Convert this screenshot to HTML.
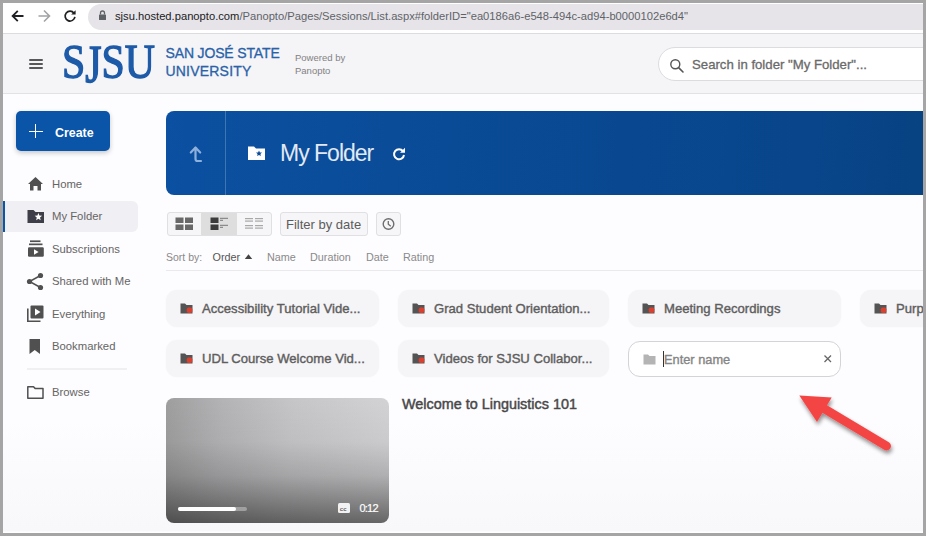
<!DOCTYPE html>
<html><head><meta charset="utf-8">
<style>
html,body{margin:0;padding:0;}
body{width:926px;height:536px;overflow:hidden;background:#a5a5a5;position:relative;font-family:"Liberation Sans",sans-serif;}
#pg{position:absolute;left:0;top:0;width:926px;height:536px;overflow:hidden;background:linear-gradient(180deg,#fdfcfe 0px,#fdfcfe 420px,#f8f7fa 531px,#ffffff 532px);clip-path:inset(3px 3px 3px 3px);}
.a{position:absolute;box-sizing:border-box;}
.t{position:absolute;white-space:nowrap;line-height:1;}
svg{position:absolute;overflow:visible;}
.tile{height:37px;background:#f5f4f6;border-radius:11px;box-shadow:0 0 2px rgba(0,0,0,0.03);}
.tt{font-size:13.1px;color:#5e5e5e;-webkit-text-stroke:0.4px #5e5e5e;}
</style></head>
<body>
<div id="pg">
  <!-- browser bar -->
  <div class="a" style="left:0;top:0;width:926px;height:34px;background:#fff;border-bottom:1px solid #dcdbde;"></div>
  <div class="a" style="left:88px;top:3.5px;width:900px;height:26px;background:#e6e4e8;border-radius:13px;"></div>
  <!-- back -->
  <svg style="left:0;top:0" width="926" height="33">
    <g fill="none" stroke="#202124" stroke-width="1.8">
      <path d="M13 16H23.5 M17.8 10.8 L12.6 16 L17.8 21.2"/>
    </g>
    <g fill="none" stroke="#a0a3a7" stroke-width="1.6">
      <path d="M38.5 16H49.5 M44 10.5 L49.5 16 L44 21.5"/>
    </g>
    <g fill="none" stroke="#202124" stroke-width="1.7">
      <path d="M74 13.2 A4.9 4.9 0 1 0 74.9 16.8"/>
    </g>
    <path d="M75.6 10.2 L75.6 14.6 L71.2 14.6 Z" fill="#202124"/>
    <g fill="#5f6368">
      <rect x="99" y="14.5" width="7" height="5.5" rx="0.6"/>
      <path d="M100.5 14.5 V13 A2 2 0 0 1 104.5 13 V14.5" fill="none" stroke="#5f6368" stroke-width="1.3"/>
    </g>
  </svg>
  <div class="t" style="left:115px;top:11px;font-size:11.2px;color:#202124;">sjsu.hosted.panopto.com<span style="color:#5f6368">/Panopto/Pages/Sessions/List.aspx#folderID="ea0186a6-e548-494c-ad94-b0000102e6d4"</span></div>

  <!-- header -->
  <div class="a" style="left:0;top:34px;width:926px;height:60px;background:#f5f4f7;border-bottom:1px solid #e2e1e4;"></div>

  <!-- hamburger -->
  <div class="a" style="left:28.5px;top:59px;width:14.5px;height:2px;background:#585858;border-radius:1px;"></div>
  <div class="a" style="left:28.5px;top:63px;width:14.5px;height:2px;background:#585858;border-radius:1px;"></div>
  <div class="a" style="left:28.5px;top:67px;width:14.5px;height:2px;background:#585858;border-radius:1px;"></div>
  <!-- SJSU logo -->
  <div class="t" style="left:62px;top:38.5px;font-family:'Liberation Serif',serif;font-size:47.5px;color:#1d5aa8;-webkit-text-stroke:1.3px #1d5aa8;transform:scaleX(0.88);transform-origin:0 0;">S<span style="display:inline-block;transform:translateY(-1.1px) scaleY(1.12);transform-origin:0 0;">J</span>SU</div>
  <div class="t" style="left:165.5px;top:46px;font-size:14px;color:#2a62a8;letter-spacing:-0.15px;-webkit-text-stroke:0.3px #2a62a8;">SAN JOSÉ STATE</div>
  <div class="t" style="left:165.5px;top:64px;font-size:14px;color:#2a62a8;letter-spacing:0.2px;-webkit-text-stroke:0.3px #2a62a8;">UNIVERSITY</div>
  <div class="t" style="left:295px;top:53px;font-size:9.5px;color:#828282;">Powered by</div>
  <div class="t" style="left:295px;top:66px;font-size:9.5px;color:#828282;">Panopto</div>
  <!-- search -->
  <div class="a" style="left:658px;top:47px;width:300px;height:34px;background:#fff;border:1px solid #dcdbdf;border-radius:17px;"></div>
  <svg style="left:0;top:0" width="926" height="100">
    <circle cx="675.3" cy="64.3" r="4.5" fill="none" stroke="#555" stroke-width="1.4"/>
    <path d="M678.6 67.6 L683 72" stroke="#555" stroke-width="1.6" stroke-linecap="round"/>
  </svg>
  <div class="t" style="left:692px;top:58px;font-size:13.2px;color:#6a6a6a;-webkit-text-stroke:0.3px #6a6a6a;">Search in folder "My Folder"...</div>

  <!-- sidebar -->
  <div class="a" style="left:16px;top:111px;width:94px;height:40px;background:#0a55a8;border-radius:5px;box-shadow:0 2px 5px rgba(0,0,0,0.22);"></div>
  <div class="a" style="left:28.5px;top:130.5px;width:14px;height:1.6px;background:#fff;"></div>
  <div class="a" style="left:34.7px;top:124.3px;width:1.6px;height:14px;background:#fff;"></div>
  <div class="t" style="left:55px;top:126.5px;font-size:12.4px;font-weight:700;color:#fff;">Create</div>

  <div class="a" style="left:3px;top:201px;width:135px;height:31px;background:#f0eff3;border-radius:0 6px 6px 0;"></div>
  <div class="a" style="left:3px;top:201px;width:2px;height:31px;background:#0a55a8;"></div>

  <svg style="left:0;top:0" width="160" height="420">
    <!-- home -->
    <path d="M28 184 L35.5 177 L43 184 L41 184 L41 190.5 L37.5 190.5 L37.5 186 L33.5 186 L33.5 190.5 L30 190.5 L30 184 Z" fill="#505050"/>
    <!-- my folder -->
    <path d="M27.5 210 H33.5 L35.5 212 H44 V223 H27.5 Z" fill="#3e3e48"/>
    <path d="M38.40 213.10 L39.40 215.62 L42.11 215.79 L40.02 217.53 L40.69 220.16 L38.40 218.70 L36.11 220.16 L36.78 217.53 L34.69 215.79 L37.40 215.62 Z" fill="#fff"/>
    <!-- subscriptions -->
    <rect x="30" y="240.4" width="10.5" height="1.7" fill="#505050"/>
    <rect x="29" y="243.5" width="13.5" height="1.7" fill="#505050"/>
    <rect x="28" y="247.3" width="15.8" height="9.5" rx="1.2" fill="#505050"/>
    <path d="M34 249.3 L38.6 252 L34 254.7 Z" fill="#fff"/>
    <!-- share -->
    <circle cx="40.5" cy="275.5" r="2.6" fill="#505050"/>
    <circle cx="29.5" cy="281.5" r="2.6" fill="#505050"/>
    <circle cx="40.5" cy="287.5" r="2.6" fill="#505050"/>
    <path d="M40.5 275.5 L29.5 281.5 L40.5 287.5" fill="none" stroke="#505050" stroke-width="1.5"/>
    <!-- everything -->
    <rect x="30.5" y="305.5" width="13" height="13" rx="1" fill="#505050"/>
    <path d="M35 308.5 L40.5 312 L35 315.5 Z" fill="#fff"/>
    <path d="M27.8 308.5 V321.2 H40.5" fill="none" stroke="#505050" stroke-width="1.6"/>
    <!-- bookmark -->
    <path d="M29.5 339 H40 V354 L34.75 350 L29.5 354 Z" fill="#505050"/>
    <!-- divider -->
    <rect x="27" y="368.5" width="100" height="1" fill="#e4e3e6"/>
    <!-- browse -->
    <path d="M27.8 386.8 H33.5 L35.3 388.6 H43 V398.2 H27.8 Z" fill="none" stroke="#505050" stroke-width="1.5" stroke-linejoin="round"/>
  </svg>
  <div class="t" style="left:52px;top:179px;font-size:11.3px;color:#656565;">Home</div>
  <div class="t" style="left:52px;top:211px;font-size:11.3px;color:#656565;">My Folder</div>
  <div class="t" style="left:52px;top:244px;font-size:11.3px;color:#656565;">Subscriptions</div>
  <div class="t" style="left:52px;top:276px;font-size:11.3px;color:#656565;">Shared with Me</div>
  <div class="t" style="left:52px;top:309px;font-size:11.3px;color:#656565;">Everything</div>
  <div class="t" style="left:52px;top:341px;font-size:11.3px;color:#656565;">Bookmarked</div>
  <div class="t" style="left:52px;top:387px;font-size:11.3px;color:#656565;">Browse</div>

  <!-- banner -->
  <div class="a" style="left:166px;top:111px;width:757px;height:84px;background:linear-gradient(95deg,#0b50a1 0%,#0a4c98 30%,#094891 60%,#08458a 85%,#074282 100%);border-radius:8px 0 0 8px;"></div>
  <div class="a" style="left:225px;top:111px;width:1px;height:84px;background:rgba(255,255,255,0.22);"></div>
  <svg style="left:0;top:0" width="926" height="200">
    <path d="M195.5 149 V159 Q195.5 161 197.5 161 H201 M190.8 152.5 L195.5 147.5 L200.2 152.5" fill="none" stroke="#8fb0dc" stroke-width="2.2" stroke-linecap="round" stroke-linejoin="round"/>
    <path d="M248 146.5 H254 L256 148.5 H265 V160 H248 Z" fill="#fff"/>
    <path d="M259 150.5 L259.9 152.4 L262 152.6 L260.4 154 L260.9 156.1 L259 155 L257.1 156.1 L257.6 154 L256 152.6 L258.1 152.4 Z" fill="#0a4c9a"/>
    <path d="M403 151.2 A5 5 0 1 0 404 155" fill="none" stroke="#fff" stroke-width="2"/>
    <path d="M405 147.8 L405 152.8 L400 152.8 Z" fill="#fff"/>
  </svg>
  <div class="t" style="left:280px;top:141.5px;font-size:23px;color:#e2e9f4;letter-spacing:-1px;">My Folder</div>

  <!-- toolbar -->
  <div class="a" style="left:167px;top:212px;width:105px;height:24px;background:#f6f5f7;border:1px solid #e0dfe2;border-radius:3px;"></div>
  <div class="a" style="left:201px;top:213px;width:36px;height:22px;background:#dedede;"></div>
  <svg style="left:0;top:0" width="926" height="280">
    <g fill="#686868">
      <rect x="175.5" y="217.5" width="8" height="5.5"/><rect x="185" y="217.5" width="8" height="5.5"/>
      <rect x="175.5" y="224.5" width="8" height="5.5"/><rect x="185" y="224.5" width="8" height="5.5"/>
    </g>
    <g fill="#3c3c3c">
      <rect x="210.5" y="217.5" width="8" height="5.5"/><rect x="210.5" y="224.5" width="8" height="5.5"/>
      <rect x="220" y="217.8" width="8" height="1" fill="#777"/><rect x="220" y="219.8" width="3" height="1" fill="#777"/>
      <rect x="220" y="224.8" width="8" height="1" fill="#777"/><rect x="220" y="226.8" width="3" height="1" fill="#777"/>
    </g>
    <g fill="#a8a8a8">
      <rect x="245" y="218" width="8" height="1.2"/><rect x="255" y="218" width="8" height="1.2"/>
      <rect x="245" y="220.5" width="8" height="1.2"/><rect x="255" y="220.5" width="8" height="1.2"/>
      <rect x="245" y="225" width="8" height="1.2"/><rect x="255" y="225" width="8" height="1.2"/>
      <rect x="245" y="227.5" width="8" height="1.2"/><rect x="255" y="227.5" width="8" height="1.2"/>
    </g>
    <path d="M244.8 259 L248.5 254.3 L252.2 259 Z" fill="#444"/>
  </svg>
  <div class="a" style="left:280px;top:212px;width:88px;height:24px;background:#f6f5f7;border:1px solid #e0dfe2;border-radius:3px;"></div>
  <div class="t" style="left:286px;top:217.5px;font-size:13px;color:#5c5c5c;">Filter by date</div>
  <div class="a" style="left:376px;top:212px;width:25px;height:24px;background:#f6f5f7;border:1px solid #e0dfe2;border-radius:3px;"></div>
  <svg style="left:0;top:0" width="926" height="280">
    <circle cx="388.5" cy="224" r="5.3" fill="none" stroke="#6e6e6e" stroke-width="1.4"/>
    <path d="M388.3 221 V224.3 L390.8 226.2" fill="none" stroke="#6e6e6e" stroke-width="1.3"/>
  </svg>
  <div class="t" style="left:166px;top:252px;font-size:10.5px;color:#8a8a8a;">Sort by:</div>
  <div class="t" style="left:212.5px;top:252px;font-size:10.8px;color:#555;">Order</div>
  <div class="t" style="left:267px;top:252px;font-size:10.8px;color:#8a8a8a;">Name</div>
  <div class="t" style="left:310px;top:252px;font-size:10.8px;color:#8a8a8a;">Duration</div>
  <div class="t" style="left:366px;top:252px;font-size:10.8px;color:#8a8a8a;">Date</div>
  <div class="t" style="left:403px;top:252px;font-size:10.8px;color:#8a8a8a;">Rating</div>
  <div class="a" style="left:166px;top:270px;width:760px;height:1px;background:#eae9ec;"></div>

  <!-- tiles -->
  <div class="a tile" style="left:166px;top:290px;width:213px;"></div>
  <svg style="left:180px;top:303px" width="13" height="11"><path d="M0.5 0.5 H5 L6.5 2 H12.5 V10.5 H0.5 Z" fill="#545454"/><rect x="6.8" y="4.5" width="5.5" height="5.5" rx="1.8" fill="#d8402f"/></svg>
  <div class="t tt" style="left:202px;top:302px;">Accessibility Tutorial Vide...</div>
  <div class="a tile" style="left:398px;top:290px;width:211px;"></div>
  <svg style="left:412px;top:303px" width="13" height="11"><path d="M0.5 0.5 H5 L6.5 2 H12.5 V10.5 H0.5 Z" fill="#545454"/><rect x="6.8" y="4.5" width="5.5" height="5.5" rx="1.8" fill="#d8402f"/></svg>
  <div class="t tt" style="left:434px;top:302px;">Grad Student Orientation...</div>
  <div class="a tile" style="left:628px;top:290px;width:213px;"></div>
  <svg style="left:642px;top:303px" width="13" height="11"><path d="M0.5 0.5 H5 L6.5 2 H12.5 V10.5 H0.5 Z" fill="#545454"/><rect x="6.8" y="4.5" width="5.5" height="5.5" rx="1.8" fill="#d8402f"/></svg>
  <div class="t tt" style="left:664px;top:302px;">Meeting Recordings</div>
  <div class="a tile" style="left:860px;top:290px;width:213px;"></div>
  <svg style="left:874px;top:303px" width="13" height="11"><path d="M0.5 0.5 H5 L6.5 2 H12.5 V10.5 H0.5 Z" fill="#545454"/><rect x="6.8" y="4.5" width="5.5" height="5.5" rx="1.8" fill="#d8402f"/></svg>
  <div class="t tt" style="left:896px;top:302px;">Purpose of Recordings...</div>
  <div class="a tile" style="left:166px;top:340px;width:213px;"></div>
  <svg style="left:180px;top:353px" width="13" height="11"><path d="M0.5 0.5 H5 L6.5 2 H12.5 V10.5 H0.5 Z" fill="#545454"/><rect x="6.8" y="4.5" width="5.5" height="5.5" rx="1.8" fill="#d8402f"/></svg>
  <div class="t tt" style="left:202px;top:352px;">UDL Course Welcome Vid...</div>
  <div class="a tile" style="left:398px;top:340px;width:211px;"></div>
  <svg style="left:412px;top:353px" width="13" height="11"><path d="M0.5 0.5 H5 L6.5 2 H12.5 V10.5 H0.5 Z" fill="#545454"/><rect x="6.8" y="4.5" width="5.5" height="5.5" rx="1.8" fill="#d8402f"/></svg>
  <div class="t tt" style="left:434px;top:352px;">Videos for SJSU Collabor...</div>

  <div class="a" style="left:628px;top:340.5px;width:213px;height:36.5px;background:#fff;border:1px solid #d4d3d7;border-radius:12px;"></div>
  <svg style="left:643px;top:354px" width="13" height="11"><path d="M0.5 0.5 H5 L6.5 2 H12.5 V10.5 H0.5 Z" fill="#b4b4b4"/></svg>
  <div class="a" style="left:663px;top:351px;width:1px;height:16px;background:#333;"></div>
  <div class="t" style="left:664px;top:354px;font-size:12.8px;color:#858585;-webkit-text-stroke:0.35px #858585;">Enter name</div>
  <svg style="left:0;top:0" width="926" height="536">
    <path d="M824.5 355.5 L831 362 M831 355.5 L824.5 362" stroke="#666" stroke-width="1.3"/>
  </svg>

  <!-- video -->
  <div class="a" style="left:166px;top:398px;width:223px;height:125px;border-radius:8px;overflow:hidden;background:linear-gradient(180deg,rgba(0,0,0,0) 0%,rgba(0,0,0,0.04) 35%,rgba(0,0,0,0.17) 62%,rgba(0,0,0,0.38) 85%,rgba(0,0,0,0.52) 100%),linear-gradient(95deg,#9e9e9f 0%,#b4b4b6 25%,#c6c6c8 55%,#d4d4d6 100%);"></div>
  <div class="a" style="left:178px;top:507px;width:69px;height:3.5px;background:rgba(255,255,255,0.35);border-radius:2px;"></div>
  <div class="a" style="left:178px;top:507px;width:58px;height:3.5px;background:#fff;border-radius:2px;"></div>
  <div class="a" style="left:338px;top:503px;width:12px;height:10px;background:#f2f2f2;border-radius:1.5px;"></div>
  <div class="t" style="left:339.8px;top:505.5px;font-size:6px;font-weight:700;color:#666;">cc</div>
  <div class="t" style="left:359.5px;top:502.5px;font-size:11px;letter-spacing:-0.8px;color:#fff;-webkit-text-stroke:0.2px #fff;">0:12</div>
  <div class="t" style="left:402px;top:397px;font-size:14.4px;color:#484848;-webkit-text-stroke:0.45px #484848;">Welcome to Linguistics 101</div>

  <!-- red arrow -->
  <svg style="left:0;top:0" width="926" height="536">
    <defs><filter id="sh" x="-50%" y="-50%" width="200%" height="200%"><feGaussianBlur in="SourceAlpha" stdDeviation="2"/><feOffset dx="1" dy="3" result="b"/><feComponentTransfer><feFuncA type="linear" slope="0.45"/></feComponentTransfer><feMerge><feMergeNode/><feMergeNode in="SourceGraphic"/></feMerge></filter></defs>
    <g filter="url(#sh)">
      <path d="M823 408 L886.5 446" stroke="#f44545" stroke-width="9" stroke-linecap="round"/>
      <path d="M799.3 395.5 L831.7 397.6 L817 422 Z" fill="#f44545"/>
    </g>
  </svg>
</div>
</body></html>
